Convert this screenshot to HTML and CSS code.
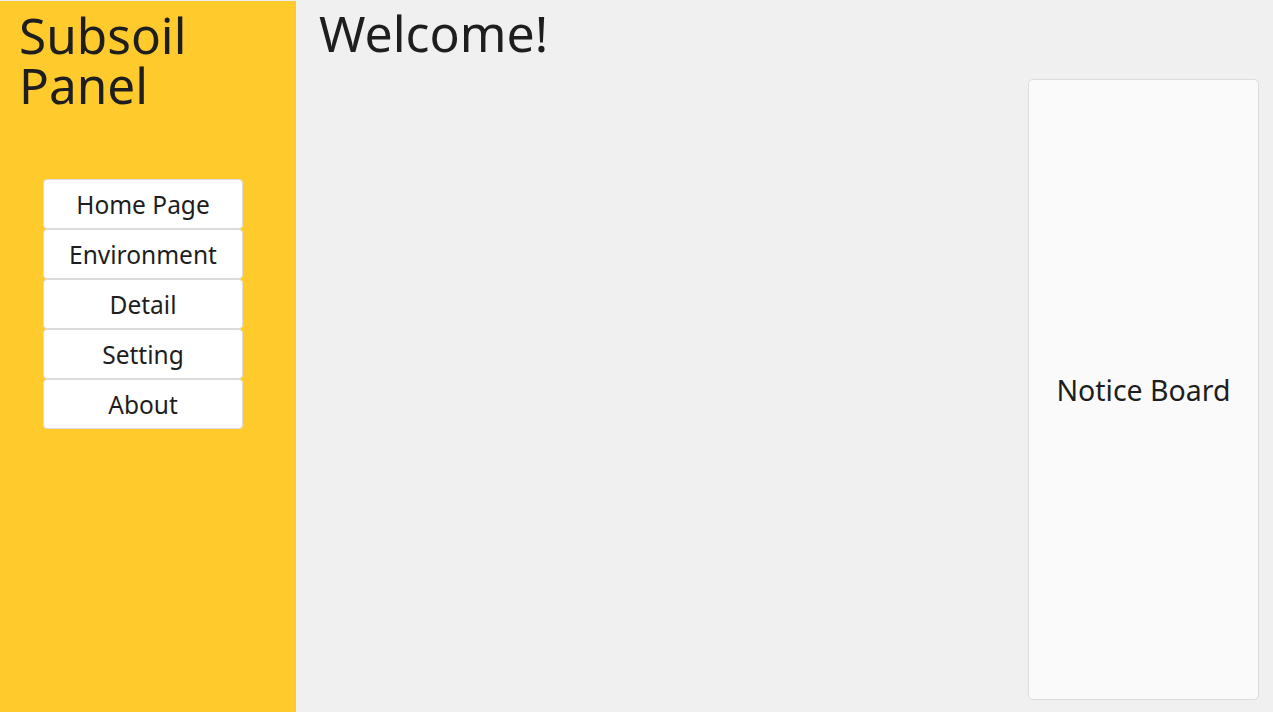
FILE: index.html
```html
<!DOCTYPE html>
<html lang="en">
<head>
<meta charset="utf-8">
<title>Subsoil Panel</title>
<link rel="stylesheet" href="styles.css">
</head>
<body>
<div class="app">
  <aside class="sidebar">
    <h1 class="brand"><span class="brand-line">Subsoil</span><span class="brand-line">Panel</span></h1>
    <nav class="menu">
      <a class="menu-item" href="#">Home Page</a>
      <a class="menu-item" href="#">Environment</a>
      <a class="menu-item" href="#">Detail</a>
      <a class="menu-item" href="#">Setting</a>
      <a class="menu-item" href="#">About</a>
    </nav>
  </aside>
  <main class="main">
    <h1 class="title">Welcome!</h1>
    <div class="content">
      <section class="notice">Notice Board</section>
    </div>
  </main>
</div>
</body>
</html>
```
FILE: styles.css
```css
html, body {
  margin: 0;
  padding: 0;
  height: 100%;
}
body {
  background: #f0f0f0;
  color: #1e1e1e;
  font-family: "Noto Sans", "Open Sans", sans-serif;
}
.app {
  display: flex;
  height: 100%;
}
.sidebar {
  width: 296px;
  flex: none;
  margin-top: 1px;
  background: #ffca2c;
  padding: 9px 0 0 19px;
  box-sizing: border-box;
}
.brand {
  margin: 0;
  font-size: 49.5px;
  font-weight: 400;
  line-height: 50px;
}
.brand-line {
  display: block;
  height: 50px;
}
.menu {
  display: flex;
  flex-direction: column;
  width: 200px;
  margin: 69px 0 0 24px;
}
.menu-item {
  display: flex;
  align-items: center;
  justify-content: center;
  height: 50px;
  box-sizing: border-box;
  background: #fff;
  border: 1px solid #dcdcdc;
  border-radius: 4px;
  color: #1e1e1e;
  text-decoration: none;
  font-size: 24.5px;
}
.main {
  flex: 1;
  display: flex;
  flex-direction: column;
  padding: 8px 14px 12px 23px;
  box-sizing: border-box;
}
.title {
  margin: 0;
  font-size: 50px;
  font-weight: 400;
  line-height: 50px;
}
.content {
  flex: 1;
  display: flex;
  justify-content: flex-end;
  margin-top: 21px;
}
.notice {
  width: 231px;
  background: #fafafa;
  border: 1px solid #dcdcdc;
  border-radius: 5px;
  box-sizing: border-box;
  display: flex;
  align-items: center;
  justify-content: center;
  font-size: 28.5px;
}
```
